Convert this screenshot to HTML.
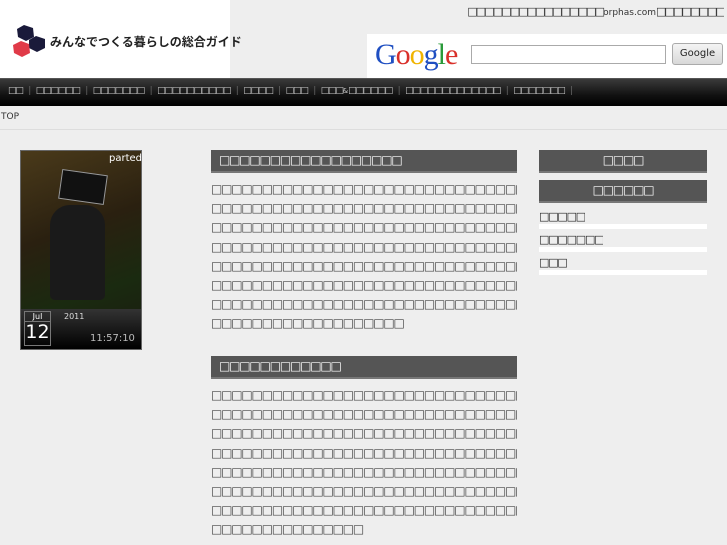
<!DOCTYPE html>
<html><head><meta charset="utf-8"><style>
*{margin:0;padding:0;box-sizing:border-box}
body{width:727px;height:545px;overflow:hidden;background:#eee;font-family:"DejaVu Sans","Liberation Sans",sans-serif;position:relative;color:#333}
.a{position:absolute}
.t{white-space:nowrap;overflow:hidden;font-size:12px;letter-spacing:-1.2px;color:#444}
.bar{background:#555;color:#fff;border-bottom:2px solid #777}
</style></head><body>
<div class="a" style="left:0;top:0;width:230px;height:78px;background:#fff"></div>
<svg class="a" style="left:12px;top:24px" width="34" height="36" viewBox="0 0 34 36">
<polygon points="12,1 21,4 22,13 14,17 6,13 5,5" fill="#1a1a3a"/>
<polygon points="24,12 33,15 33,24 25,28 17,24 17,16" fill="#1a1a3a"/>
<polygon points="9,17 17,20 18,29 10,33 2,29 1,21" fill="#e03a48"/>
</svg>
<div class="a" style="left:50px;top:33px;font-size:12px;color:#222;font-family:'Noto Sans CJK JP',sans-serif;font-weight:bold">みんなでつくる暮らしの総合ガイド</div>
<div class="a t" style="right:3px;top:5px;font-size:11px;color:#333;letter-spacing:-1.9px">□□□□□□□□□□□□□□□□<span style="letter-spacing:0;font-size:9px">orphas.com</span>□□□□□□□□</div>
<div class="a" style="left:367px;top:34px;width:360px;height:44px;background:#fff"></div>
<div class="a" style="left:375px;top:38px;font-family:'Liberation Serif',serif;font-size:30px;letter-spacing:-1px"><span style="color:#1f4fc2">G</span><span style="color:#d9302a">o</span><span style="color:#f0b400">o</span><span style="color:#1f4fc2">g</span><span style="color:#2a9a3a">l</span><span style="color:#d9302a">e</span></div>
<div class="a" style="left:471px;top:45px;width:195px;height:19px;border:1px solid #aaa;background:#fff"></div>
<div class="a" style="left:672px;top:43px;width:51px;height:22px;border:1px solid #aaa;border-radius:3px;background:linear-gradient(#f4f4f4,#d8d8d8);font-size:10px;text-align:center;line-height:20px;color:#222">Google</div>
<div class="a" style="left:0;top:78px;width:727px;height:28px;background:linear-gradient(#3a3a3a,#111 60%,#000);border-top:1px solid #555"></div>
<div class="a t" style="left:8px;top:86px;color:#ccc;font-size:9px;letter-spacing:-1.2px;word-spacing:4px">□□ <span style="color:#666">|</span> □□□□□□ <span style="color:#666">|</span> □□□□□□□ <span style="color:#666">|</span> □□□□□□□□□□ <span style="color:#666">|</span> □□□□ <span style="color:#666">|</span> □□□ <span style="color:#666">|</span> □□□<span style="font-size:7px;letter-spacing:0">&amp;</span>□□□□□□ <span style="color:#666">|</span> □□□□□□□□□□□□□ <span style="color:#666">|</span> □□□□□□□ <span style="color:#666">|</span></div>
<div class="a" style="left:1px;top:112px;font-size:9px;color:#333">TOP</div>
<div class="a" style="left:0;top:129px;width:727px;height:1px;background:#ddd"></div>
<div class="a" style="left:20px;top:150px;width:122px;height:200px;background:linear-gradient(160deg,#4a3a1a,#2a2010 40%,#1a2a10 70%,#1a1a10);border:1px solid #666"></div>
<div class="a" style="left:60px;top:172px;width:46px;height:30px;background:#111;border:1px solid #999;transform:rotate(8deg)"></div>
<div class="a" style="left:50px;top:205px;width:55px;height:95px;background:#1a1a1a;border-radius:20px 20px 5px 5px"></div>
<div class="a" style="left:109px;top:153px;font-size:10px;color:#fff">parted</div>
<div class="a" style="left:21px;top:309px;width:120px;height:40px;background:linear-gradient(#333,#000)"></div>
<div class="a" style="left:24px;top:311px;width:27px;height:35px;border:1px solid #777;color:#fff;text-align:center;font-size:8px">Jul<div style="font-size:19px;line-height:20px;border-top:1px solid #777">12</div></div>
<div class="a" style="left:64px;top:312px;font-size:8px;color:#ddd">2011</div>
<div class="a" style="left:90px;top:333px;font-size:10px;color:#bbb">11:57:10</div>
<div class="a bar t" style="left:211px;top:150px;width:306px;height:23px;line-height:21px;padding-left:8px;color:#fff">□□□□□□□□□□□□□□□□□□</div>
<div class="a" style="left:211px;top:180px;width:306px;line-height:19.2px">
<div class="t">□□□□□□□□□□□□□□□□□□□□□□□□□□□□□□□□□□□□□□</div><div class="t">□□□□□□□□□□□□□□□□□□□□□□□□□□□□□□□□□□□□□□</div><div class="t">□□□□□□□□□□□□□□□□□□□□□□□□□□□□□□□□□□□□□□</div><div class="t">□□□□□□□□□□□□□□□□□□□□□□□□□□□□□□□□□□□□□□</div><div class="t">□□□□□□□□□□□□□□□□□□□□□□□□□□□□□□□□□□□□□□</div><div class="t">□□□□□□□□□□□□□□□□□□□□□□□□□□□□□□□□□□□□□□</div><div class="t">□□□□□□□□□□□□□□□□□□□□□□□□□□□□□□□□□□□□□□</div><div class="t">□□□□□□□□□□□□□□□□□□□</div></div>
<div class="a bar t" style="left:211px;top:356px;width:306px;height:23px;line-height:21px;padding-left:8px;color:#fff">□□□□□□□□□□□□</div>
<div class="a" style="left:211px;top:386px;width:306px;line-height:19.2px">
<div class="t">□□□□□□□□□□□□□□□□□□□□□□□□□□□□□□□□□□□□□□</div><div class="t">□□□□□□□□□□□□□□□□□□□□□□□□□□□□□□□□□□□□□□</div><div class="t">□□□□□□□□□□□□□□□□□□□□□□□□□□□□□□□□□□□□□□</div><div class="t">□□□□□□□□□□□□□□□□□□□□□□□□□□□□□□□□□□□□□□</div><div class="t">□□□□□□□□□□□□□□□□□□□□□□□□□□□□□□□□□□□□□□</div><div class="t">□□□□□□□□□□□□□□□□□□□□□□□□□□□□□□□□□□□□□□</div><div class="t">□□□□□□□□□□□□□□□□□□□□□□□□□□□□□□□□□□□□□□</div><div class="t">□□□□□□□□□□□□□□□</div></div>
<div class="a bar t" style="left:539px;top:150px;width:168px;height:23px;line-height:21px;text-align:center;color:#fff">□□□□</div>
<div class="a bar t" style="left:539px;top:180px;width:168px;height:23px;line-height:21px;text-align:center;color:#fff">□□□□□□</div>
<div class="a t" style="left:539px;top:210px;color:#222;font-size:11px">□□□□□</div>
<div class="a" style="left:539px;top:224px;width:168px;height:5px;background:#fff"></div>
<div class="a t" style="left:539px;top:233px;color:#222;font-size:11px">□□□□□□□</div>
<div class="a" style="left:539px;top:247px;width:168px;height:5px;background:#fff"></div>
<div class="a t" style="left:539px;top:256px;color:#222;font-size:11px">□□□</div>
<div class="a" style="left:539px;top:270px;width:168px;height:5px;background:#fff"></div>
</body></html>
